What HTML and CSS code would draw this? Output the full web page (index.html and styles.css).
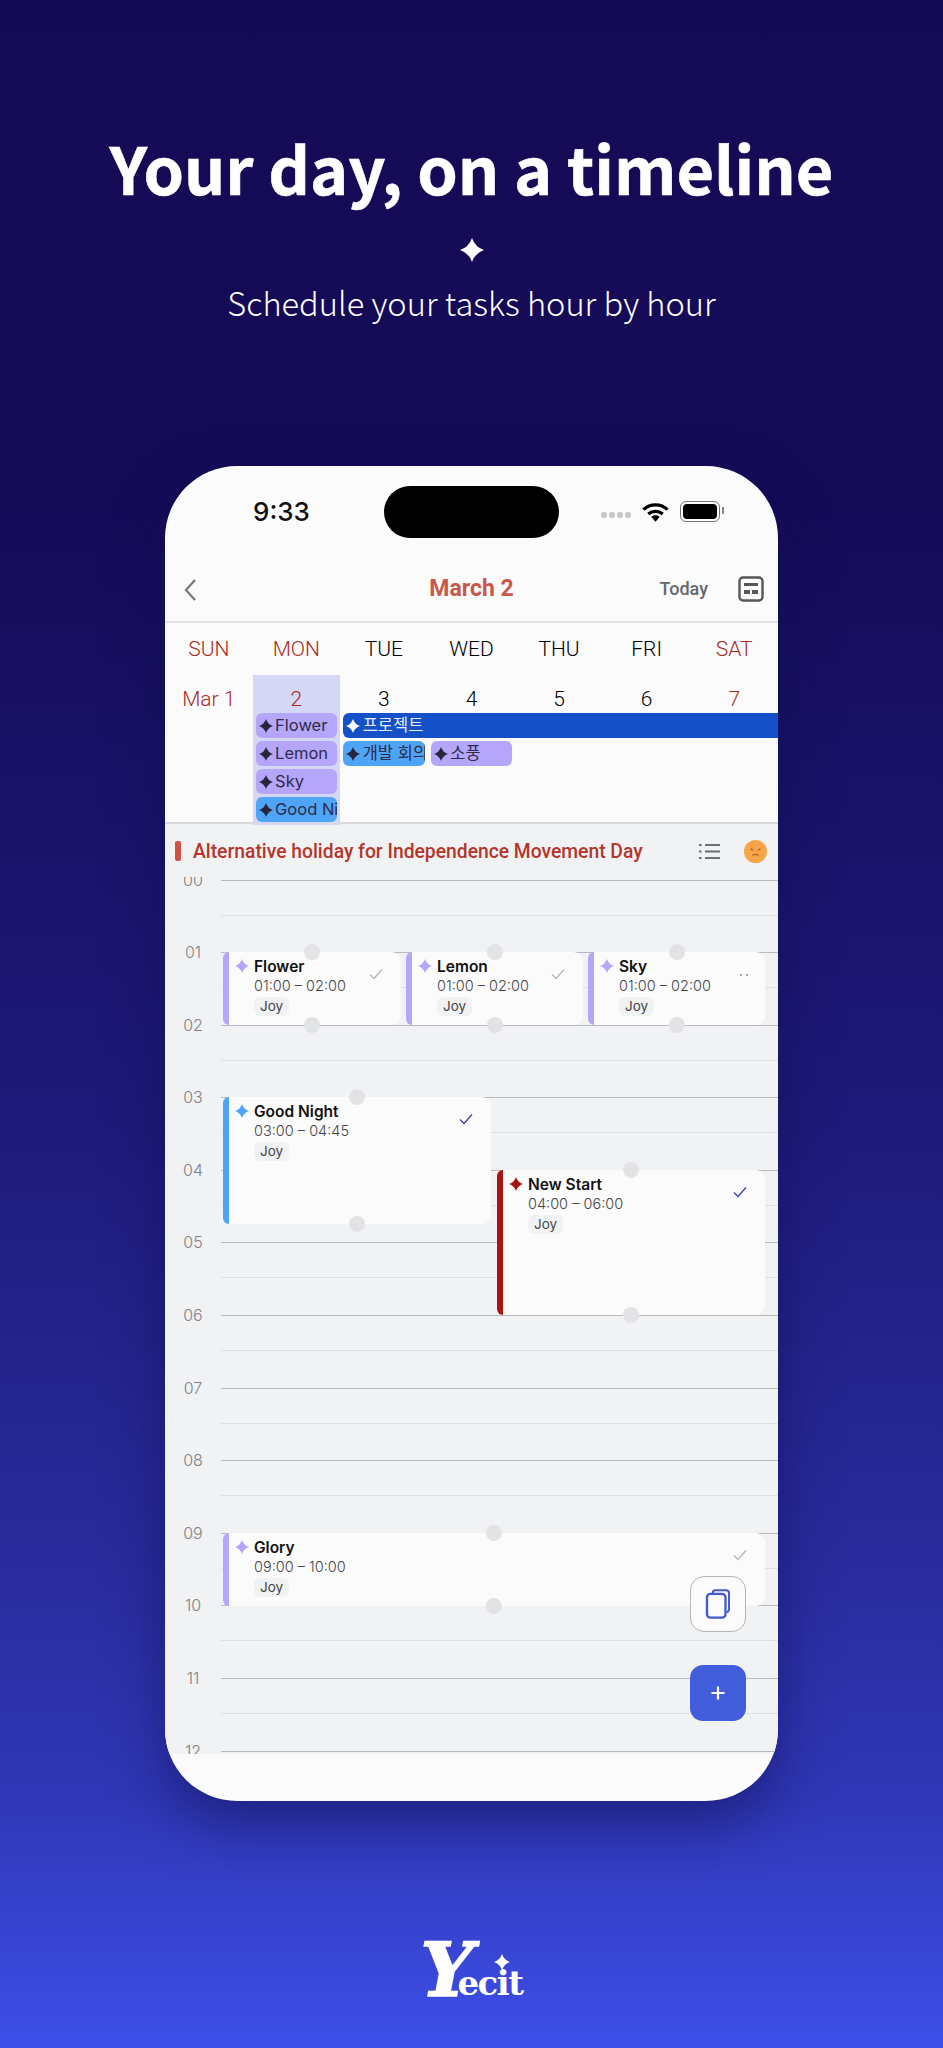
FILE: index.html
```html
<!DOCTYPE html>
<html lang="en">
<head>
    <meta charset="UTF-8">
    <meta name="viewport" content="width=device-width, initial-scale=1.0">
    <title>Your day, on a timeline</title>
    <link rel="stylesheet" href="styles.css">
</head>
<body>

<svg class="defs" width="0" height="0">
    <symbol id="star" viewBox="0 0 24 24">
        <path d="M12 0Q15 9 24 12Q15 15 12 24Q9 15 0 12Q9 9 12 0Z"/>
    </symbol>
    <symbol id="check" viewBox="0 0 14 12">
        <path d="M1 6.500L5 10.500L13 1.500" fill="none" stroke="currentColor" stroke-width="1.300"/>
    </symbol>
</svg>

<header class="hero">
    <h1>Your day, on a timeline</h1>
    <svg class="hero-star"><use href="#star"/></svg>
    <p>Schedule your tasks hour by hour</p>
</header>

<main class="phone">
    <div class="status-bar">
        <span class="clock">9:33</span>
        <div class="island"></div>
        <div class="status-icons">
            <span class="signal"><i></i><i></i><i></i><i></i></span>
            <svg class="wifi" viewBox="0 0 28 20">
                <path d="M1.500 7.500C8.500 1 19.500 1 26.500 7.500" fill="none" stroke="#000" stroke-width="3.400"/>
                <path d="M6.500 12C10.500 8.500 17.500 8.500 21.500 12" fill="none" stroke="#000" stroke-width="3.400"/>
                <path d="M9.500 15C12 12.800 16 12.800 18.500 15L14 20Z"/>
            </svg>
            <span class="battery"><i></i></span>
        </div>
    </div>

    <nav class="top-nav">
        <svg class="back" viewBox="0 0 14 24"><path d="M12 2L3 12L12 22" fill="none" stroke="#77797d" stroke-width="2.200"/></svg>
        <h2>March 2</h2>
        <span class="today">Today</span>
        <svg class="cal-icon" viewBox="0 0 26 26">
            <rect x="1.500" y="1.500" width="23" height="23" rx="3.500" fill="none" stroke="#55575b" stroke-width="2.400"/>
            <rect x="6" y="7" width="14" height="3" fill="#55575b"/>
            <rect x="6" y="14" width="6" height="4" fill="#55575b"/>
            <rect x="14" y="14" width="6" height="4" fill="#55575b"/>
        </svg>
    </nav>

    <div class="week-head">
        <span class="red">SUN</span>
        <span class="red">MON</span>
        <span>TUE</span>
        <span>WED</span>
        <span>THU</span>
        <span>FRI</span>
        <span class="red">SAT</span>
    </div>

    <section class="month-grid">
        <div class="today-col"></div>
        <span class="date red col-1">Mar 1</span>
        <span class="date red col-2">2</span>
        <span class="date col-3">3</span>
        <span class="date col-4">4</span>
        <span class="date col-5">5</span>
        <span class="date col-6">6</span>
        <span class="date red col-7">7</span>

        <div class="chip purple col-2 row-2"><svg><use href="#star"/></svg>Flower</div>
        <div class="chip purple col-2 row-3"><svg><use href="#star"/></svg>Lemon</div>
        <div class="chip purple col-2 row-4"><svg><use href="#star"/></svg>Sky</div>
        <div class="chip blue col-2 row-5"><svg><use href="#star"/></svg>Good Night</div>
        <div class="chip project row-2"><svg><use href="#star"/></svg>프로젝트</div>
        <div class="chip blue col-3 row-3"><svg><use href="#star"/></svg>개발 회의</div>
        <div class="chip purple col-4 row-3"><svg><use href="#star"/></svg>소풍</div>
    </section>

    <div class="holiday">
        <span class="holiday-mark"></span>
        <span class="holiday-text">Alternative holiday for Independence Movement Day</span>
        <svg class="list-icon" viewBox="0 0 21 17">
            <path d="M6 2H21M6 8.500H21M6 15H21" stroke="#6d6f73" stroke-width="2"/>
            <path d="M0 2H2.500M0 8.500H2.500M0 15H2.500" stroke="#6d6f73" stroke-width="2"/>
        </svg>
        <svg class="face" viewBox="0 0 23 23">
            <circle cx="11.500" cy="11.500" r="11.500" fill="#f6a649"/>
            <path d="M6.500 9L9 10M16.500 9L14 10" stroke="#a9682a" stroke-width="1.400"/>
            <path d="M8.500 15.500C10 14 13 14 14.500 15.500" fill="none" stroke="#a9682a" stroke-width="1.400"/>
        </svg>
    </div>

    <section class="timeline">
        <div class="hour"><span>00</span><div class="hour-line"><div class="half"></div></div></div>
        <div class="hour"><span>01</span><div class="hour-line"><div class="half"></div></div></div>
        <div class="hour"><span>02</span><div class="hour-line"><div class="half"></div></div></div>
        <div class="hour"><span>03</span><div class="hour-line"><div class="half"></div></div></div>
        <div class="hour"><span>04</span><div class="hour-line"><div class="half"></div></div></div>
        <div class="hour"><span>05</span><div class="hour-line"><div class="half"></div></div></div>
        <div class="hour"><span>06</span><div class="hour-line"><div class="half"></div></div></div>
        <div class="hour"><span>07</span><div class="hour-line"><div class="half"></div></div></div>
        <div class="hour"><span>08</span><div class="hour-line"><div class="half"></div></div></div>
        <div class="hour"><span>09</span><div class="hour-line"><div class="half"></div></div></div>
        <div class="hour"><span>10</span><div class="hour-line"><div class="half"></div></div></div>
        <div class="hour"><span>11</span><div class="hour-line"><div class="half"></div></div></div>
        <div class="hour"><span>12</span><div class="hour-line"><div class="half"></div></div></div>

        <article class="event ev-flower tint-purple">
            <svg class="ev-star"><use href="#star"/></svg>
            <h3>Flower</h3>
            <p>01:00 – 02:00</p>
            <span class="tag">Joy</span>
            <svg class="ev-check"><use href="#check"/></svg>
            <i class="handle top"></i><i class="handle bottom"></i>
        </article>
        <article class="event ev-lemon tint-purple">
            <svg class="ev-star"><use href="#star"/></svg>
            <h3>Lemon</h3>
            <p>01:00 – 02:00</p>
            <span class="tag">Joy</span>
            <svg class="ev-check"><use href="#check"/></svg>
            <i class="handle top"></i><i class="handle bottom"></i>
        </article>
        <article class="event ev-sky tint-purple">
            <svg class="ev-star"><use href="#star"/></svg>
            <h3>Sky</h3>
            <p>01:00 – 02:00</p>
            <span class="tag">Joy</span>
            <span class="ev-dots"><i></i><i></i></span>
            <i class="handle top"></i><i class="handle bottom"></i>
        </article>
        <article class="event ev-night tint-blue">
            <svg class="ev-star"><use href="#star"/></svg>
            <h3>Good Night</h3>
            <p>03:00 – 04:45</p>
            <span class="tag">Joy</span>
            <svg class="ev-check done"><use href="#check"/></svg>
            <i class="handle top"></i><i class="handle bottom"></i>
        </article>
        <article class="event ev-start tint-red">
            <svg class="ev-star"><use href="#star"/></svg>
            <h3>New Start</h3>
            <p>04:00 – 06:00</p>
            <span class="tag">Joy</span>
            <svg class="ev-check done"><use href="#check"/></svg>
            <i class="handle top"></i><i class="handle bottom"></i>
        </article>
        <article class="event ev-glory tint-purple">
            <svg class="ev-star"><use href="#star"/></svg>
            <h3>Glory</h3>
            <p>09:00 – 10:00</p>
            <span class="tag">Joy</span>
            <svg class="ev-check"><use href="#check"/></svg>
            <i class="handle top"></i><i class="handle bottom"></i>
        </article>

        <button class="fab copy">
            <svg viewBox="0 0 28 34">
                <path d="M8 5V4.500C8 2.500 9.500 1.500 11 1.500H23C25 1.500 26.500 3 26.500 5V23C26.500 25 25 26 23.500 26" fill="none" stroke="#4059cf" stroke-width="2.200"/>
                <rect x="1.500" y="5.500" width="21" height="27" rx="4" fill="none" stroke="#4059cf" stroke-width="2.600"/>
            </svg>
        </button>
        <button class="fab add">
            <svg viewBox="0 0 14 14"><path d="M7 0.500V13.500M0.500 7H13.500" stroke="#fff" stroke-width="2.200"/></svg>
        </button>
    </section>
</main>

<footer class="brand">
    <span class="brand-y">Y</span><span class="brand-rest">ecit</span>
    <svg class="brand-star"><use href="#star"/></svg>
</footer>

</body>
</html>
```
FILE: styles.css
```css
/* Reset */
* {
    margin: 0;
    padding: 0;
    box-sizing: border-box;
}

body {
    width: 943px;
    height: 2048px;
    overflow: hidden;
    font-family: Inter, "Noto Sans CJK KR", sans-serif;
    background: linear-gradient(180deg, #140a55 0%, #150b58 25%, #1e1a7a 55%, #2a2da0 78%, #3038b8 88%, #3d4fe8 100%);
    color: #fff;
}

.defs {
    position: absolute;
}

/* Hero */
.hero {
    height: 466px;
    padding-top: 127px;
    text-align: center;
    font-family: "Noto Sans CJK KR", "Noto Sans", sans-serif;
}

.hero h1 {
    font-size: 64.800px;
    font-weight: 700;
    line-height: 80px;
    -webkit-text-stroke: 0.600px #fff;
}

.hero-star {
    display: block;
    width: 24px;
    height: 24px;
    margin: 31px auto 0;
    fill: #fff;
}

.hero p {
    margin-top: 16px;
    font-size: 32.600px;
    font-weight: 300;
    line-height: 48px;
}

/* Phone */
.phone {
    position: relative;
    width: 613px;
    height: 1335px;
    margin-left: 165px;
    border-radius: 72px;
    background: #fbfbfc;
    color: #222;
    overflow: hidden;
    box-shadow: 0 22px 55px rgba(15, 15, 80, 0.55);
}

.status-bar {
    position: relative;
    height: 90px;
}

.clock {
    position: absolute;
    left: 88px;
    top: 31px;
    font-family: Inter, sans-serif;
    font-size: 26px;
    font-weight: 500;
    line-height: 30px;
    color: #111;
}

.island {
    position: absolute;
    left: 219px;
    top: 20px;
    width: 175px;
    height: 52px;
    border-radius: 26px;
    background: #000;
}

.status-icons {
    position: absolute;
    left: 436px;
    top: 35px;
    display: flex;
    align-items: center;
    gap: 11px;
}

.signal {
    display: flex;
    gap: 2px;
    margin-top: 6px;
}

.signal i {
    width: 6px;
    height: 6px;
    border-radius: 2px;
    background: #c9cacc;
}

.wifi {
    width: 27px;
    height: 20px;
}

.battery {
    display: block;
    position: relative;
    width: 40px;
    height: 21px;
    padding: 2px;
    border: 1.500px solid #777;
    border-radius: 6px;
}

.battery i {
    display: block;
    height: 100%;
    border-radius: 4px;
    background: #000;
}

.battery::after {
    content: "";
    position: absolute;
    right: -5px;
    top: 5px;
    width: 2px;
    height: 7px;
    background: #888;
}

.top-nav {
    position: relative;
    display: flex;
    align-items: center;
    justify-content: flex-end;
    height: 67px;
    padding: 0 14px 0 0;
    border-bottom: 2px solid #e2e3e5;
}

.top-nav h2 {
    position: absolute;
    left: 0;
    right: 0;
    text-align: center;
    font-family: Roboto, sans-serif;
    font-size: 23px;
    font-weight: 700;
    color: #c9574a;
}

.back {
    position: absolute;
    left: 18px;
    top: 22px;
    width: 14px;
    height: 24px;
}

.today {
    margin-right: 30px;
    font-family: Roboto, sans-serif;
    font-size: 18px;
    font-weight: 500;
    color: #66686c;
}

.cal-icon {
    width: 26px;
    height: 26px;
}

.week-head {
    display: grid;
    grid-template-columns: repeat(7, 1fr);
    height: 52px;
    text-align: center;
    font-family: Roboto, sans-serif;
    font-size: 21px;
    font-weight: 300;
    line-height: 52px;
    color: #000;
}

.red {
    color: #a82a20;
}

/* Month strip */
.month-grid {
    display: grid;
    grid-template-columns: repeat(7, 1fr);
    grid-template-rows: 38px repeat(4, 28px);
    height: 147px;
}

.today-col {
    grid-column: 2;
    grid-row: 1 / 6;
    background: #d5d8f5;
}

.date {
    grid-row: 1;
    text-align: center;
    font-family: Roboto, sans-serif;
    font-size: 21px;
    font-weight: 300;
    line-height: 48px;
    height: 38px;
}

.date:not(.red) {
    color: #000;
}

.col-1 { grid-column: 1; }
.col-2 { grid-column: 2; }
.col-3 { grid-column: 3; }
.col-4 { grid-column: 4; }
.col-5 { grid-column: 5; }
.col-6 { grid-column: 6; }
.col-7 { grid-column: 7; }

.row-2 { grid-row: 2; }
.row-3 { grid-row: 3; }
.row-4 { grid-row: 4; }
.row-5 { grid-row: 5; }

.chip {
    display: flex;
    align-items: center;
    gap: 2.500px;
    height: 25px;
    margin: 0 3px;
    padding-left: 3px;
    border-radius: 6px;
    font-size: 16.500px;
    line-height: 25px;
    white-space: nowrap;
    overflow: hidden;
    color: #2c2c48;
}

.chip svg {
    flex: none;
    width: 14px;
    height: 14px;
    fill: #26263c;
}

.chip.purple {
    background: #b5a6fb;
}

.chip.blue {
    background: #4ea5f8;
}

.chip.project {
    grid-column: 3 / 8;
    margin-right: 0;
    border-radius: 6px 0 0 6px;
    background: #1450c8;
    color: #e8ecfa;
}

.chip.project svg {
    fill: #fff;
}

/* Holiday bar */
.holiday {
    display: flex;
    align-items: center;
    height: 55px;
    padding: 1px 11px 0 10px;
    border-top: 2px solid #d8d9db;
    background: #f1f2f4;
}

.holiday-mark {
    width: 6px;
    height: 20px;
    margin-right: 12px;
    border-radius: 2px;
    background: #cf5244;
}

.holiday-text {
    flex: 1;
    font-family: Roboto, sans-serif;
    font-size: 19.300px;
    font-weight: 500;
    color: #b5352a;
}

.list-icon {
    width: 21px;
    height: 17px;
    margin-right: 24px;
}

.face {
    width: 23px;
    height: 23px;
}

/* Timeline */
.timeline {
    position: relative;
    height: 877px;
    padding-top: 2.500px;
    background: #f1f2f4;
    overflow: hidden;
}

.hour {
    display: flex;
    height: 72.600px;
}

.hour span {
    width: 56px;
    margin-top: -10px;
    text-align: center;
    font-size: 16px;
    line-height: 20px;
    font-weight: 300;
    color: #808185;
}

.hour-line {
    flex: 1;
    border-top: 1.500px solid #b9babd;
}

.half {
    height: 35px;
    border-bottom: 1px solid #dfe0e3;
}

/* Events */
.event {
    position: absolute;
    padding: 5px 0 0 25px;
    border-left: 6px solid;
    border-radius: 6px 9px 9px 6px;
    background: #fbfbfc;
}

.ev-flower { left: 58px; top: 75px; width: 178px; height: 72.500px; }
.ev-lemon { left: 241px; top: 75px; width: 177px; height: 72.500px; }
.ev-sky { left: 423px; top: 75px; width: 177px; height: 72.500px; }
.ev-night { left: 58px; top: 220px; width: 268px; height: 127px; }
.ev-start { left: 332px; top: 293px; width: 268px; height: 145px; }
.ev-glory { left: 58px; top: 656px; width: 542px; height: 72.500px; }

.tint-purple { border-color: #b5a6fb; }
.tint-blue { border-color: #4ea5f8; }
.tint-red { border-color: #a8140f; }

.tint-purple .ev-star { fill: #b5a6fb; }
.tint-blue .ev-star { fill: #4ea5f8; }
.tint-red .ev-star { fill: #a8140f; }

.ev-star {
    position: absolute;
    left: 6px;
    top: 7px;
    width: 14px;
    height: 14px;
}

.event h3 {
    font-size: 15.500px;
    font-weight: 600;
    line-height: 19px;
    color: #111;
}

.event p {
    font-size: 14.500px;
    font-weight: 300;
    line-height: 19px;
    color: #444;
}

.tag {
    display: inline-block;
    padding: 0 6px;
    border-radius: 6px;
    font-size: 13.500px;
    line-height: 19px;
    background: #f1f2f4;
    color: #444;
}

.ev-check {
    position: absolute;
    right: 18px;
    top: 16px;
    width: 14px;
    height: 12px;
    color: #b4b5b8;
}

.ev-check.done {
    color: #3a3fb5;
}

.ev-dots {
    position: absolute;
    right: 17px;
    top: 22px;
    display: flex;
    gap: 4px;
}

.ev-dots i {
    width: 2px;
    height: 2px;
    background: #a8a9ac;
}

.handle {
    position: absolute;
    left: calc(50% - 11px);
    width: 16px;
    height: 16px;
    border-radius: 50%;
    background: #e2e3e5;
}

.handle.top {
    top: -8px;
}

.handle.bottom {
    bottom: -8px;
}

/* Floating buttons */
.fab {
    position: absolute;
    left: 525px;
    width: 56px;
    height: 56px;
    display: flex;
    align-items: center;
    justify-content: center;
}

.fab.copy {
    top: 699px;
    border: 1.500px solid #b4b5b8;
    border-radius: 14px;
    background: #fbfbfc;
}

.fab.copy svg {
    width: 26px;
    height: 30px;
}

.fab.add {
    top: 788px;
    border: none;
    border-radius: 13px;
    background: #425ddc;
}

.fab.add svg {
    width: 14px;
    height: 14px;
}

/* Brand */
.brand {
    position: relative;
    display: flex;
    align-items: flex-end;
    justify-content: center;
    height: 205px;
    color: #fff;
}

.brand-y {
    font-family: "DejaVu Serif", serif;
    font-size: 74px;
    font-weight: 700;
    font-style: italic;
    line-height: 72px;
    -webkit-text-stroke: 1.500px #fff;
}

.brand-rest {
    margin-left: -16px;
    font-family: "DejaVu Serif", serif;
    font-size: 34px;
    font-weight: 700;
    letter-spacing: -1.500px;
    line-height: 46px;
}

.brand-star {
    position: absolute;
    left: 494px;
    top: 153px;
    width: 16px;
    height: 16px;
    fill: #fff;
}
```
